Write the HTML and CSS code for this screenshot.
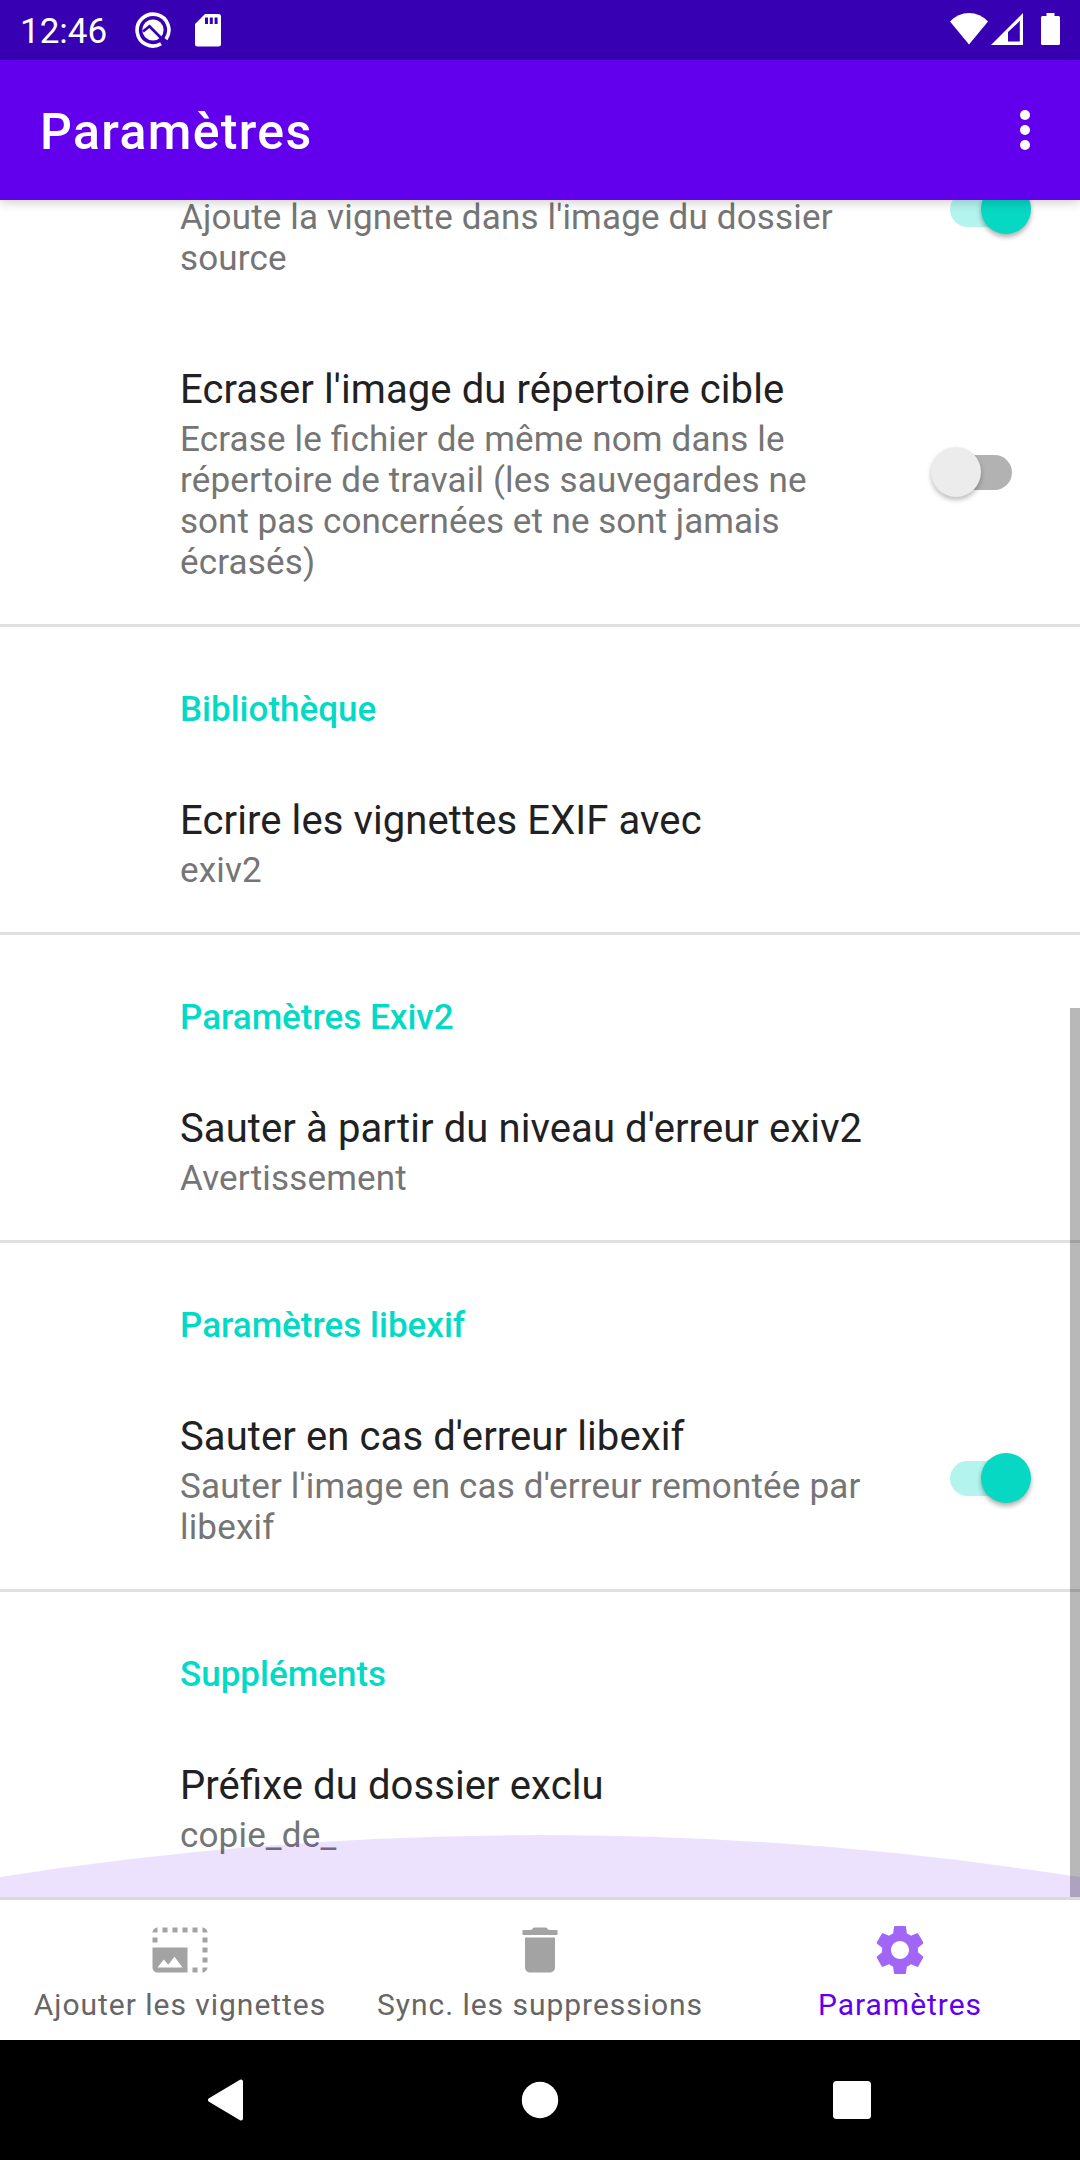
FILE: index.html
```html
<!DOCTYPE html>
<html lang="fr">
<head>
<meta charset="utf-8">
<title>Paramètres</title>
<link rel="stylesheet" href="styles.css">
</head>
<body>
<div class="screen">
  <header class="status-bar">
    <span class="clock">12:46</span>
    <svg class="status-q" width="36" height="36" viewBox="0 0 36 36">
      <path d="M26 31.800A15.900 15.900 0 1 1 31 27.200" fill="none" stroke="#fff" stroke-width="3.600"/>
      <circle cx="18" cy="18" r="10.600" fill="#fff"/>
      <path d="M8 19.500L14.500 14.200L29.500 29.500" fill="none" stroke="#3700b3" stroke-width="2.700"/>
    </svg>
    <svg class="status-sd" width="26" height="33" viewBox="0 0 26 33">
      <path fill="#fff" fill-rule="evenodd" d="M10 0H23.500Q26 0 26 2.500V30Q26 32.500 23.500 32.500H2.500Q0 32.500 0 30V10ZM10 3.500V10h3V3.500ZM14.800 3.500V10h3V3.500ZM19.600 3.500V10h3V3.500Z"/>
    </svg>
    <span class="spacer"></span>
    <div class="indicators">
      <svg width="38" height="32" viewBox="0 0 38 32"><path fill="#fff" d="M0 8.500Q8 0 19 0T38 8.500L19 31.500Z"/></svg>
      <svg class="status-cell" width="32" height="32" viewBox="0 0 32 32"><path fill="#fff" fill-rule="evenodd" d="M0 32L32 0V32ZM17 19V28.500H28.800V8Z"/></svg>
      <svg class="status-battery" width="19" height="32" viewBox="0 0 19 32"><path fill="#fff" d="M5.500 0h8v3H17.500Q19 3 19 4.500V30.500Q19 32 17.500 32H1.500Q0 32 0 30.500V4.500Q0 3 1.500 3h4Z"/></svg>
    </div>
  </header>

  <div class="app-bar">
    <h1 class="app-title">Paramètres</h1>
    <svg width="10" height="40" viewBox="0 0 10 40" fill="#fff"><circle cx="5" cy="5" r="5"/><circle cx="5" cy="20" r="5"/><circle cx="5" cy="35" r="5"/></svg>
  </div>

  <main class="content">
    <section class="group group-first">
      <div class="row row-cut">
        <div class="text"><p class="summary">Ajoute la vignette dans l'image du dossier<br>source</p></div>
        <div class="switch on"></div>
      </div>
      <div class="row row-overwrite">
        <div class="text">
          <p class="title">Ecraser l'image du répertoire cible</p>
          <p class="summary">Ecrase le fichier de même nom dans le<br>répertoire de travail (les sauvegardes ne<br><span class="tight">sont pas concernées et ne sont jamais</span><br>écrasés)</p>
        </div>
        <div class="switch off"></div>
      </div>
    </section>
    <section class="group">
      <h2 class="category">Bibliothèque</h2>
      <div class="row"><div class="text"><p class="title">Ecrire les vignettes EXIF avec</p><p class="summary">exiv2</p></div></div>
    </section>
    <section class="group">
      <h2 class="category">Paramètres Exiv2</h2>
      <div class="row"><div class="text"><p class="title">Sauter à partir du niveau d'erreur exiv2</p><p class="summary">Avertissement</p></div></div>
    </section>
    <section class="group">
      <h2 class="category">Paramètres libexif</h2>
      <div class="row">
        <div class="text"><p class="title">Sauter en cas d'erreur libexif</p><p class="summary">Sauter l'image en cas d'erreur remontée par<br>libexif</p></div>
        <div class="switch on"></div>
      </div>
    </section>
    <section class="group">
      <h2 class="category">Suppléments</h2>
      <div class="row"><div class="text"><p class="title">Préfixe du dossier exclu</p><p class="summary">copie_de_</p></div></div>
    </section>
    <div class="scrollbar"></div>
    <svg class="overscroll" width="1080" height="62" viewBox="0 0 1080 62"><path d="M0 42Q270 0 540 0T1080 42V62H0Z" fill="#6200ee" fill-opacity=".115"/></svg>
  </main>

  <nav class="tabs">
    <a class="tab">
      <svg class="tab-icon" width="60" height="60" viewBox="0 0 24 24" fill="#a3a3a3"><path d="M17 19h2v2h-2zM21 19h2c0 1-1 2-2 2zM21 15h2v2h-2zM21 11h2v2h-2zM21 7h2v2h-2zM17 3h2v2h-2zM13 3h2v2h-2zM9 3h2v2H9zM5 3h2v2H5zM1 7h2v2H1zM21 3c1 0 2 1 2 2h-2zM3 3v2H1c0-1 1-2 2-2zM1 11v8c0 1.100.9 2 2 2h12V11zm2 8l2.500-3.210 1.790 2.150 2.500-3.220L13 19z"/></svg>
      <span class="tab-label">Ajouter les vignettes</span>
    </a>
    <a class="tab">
      <svg class="tab-icon" width="60" height="60" viewBox="0 0 24 24" fill="#a3a3a3"><path d="M6 19c0 1.100.9 2 2 2h8c1.100 0 2-.9 2-2V7H6v12zM19 4h-3.500l-1-1h-5l-1 1H5v2h14V4z"/></svg>
      <span class="tab-label">Sync. les suppressions</span>
    </a>
    <a class="tab active">
      <svg class="tab-icon" width="60" height="60" viewBox="0 0 24 24" fill="#a166f5"><path d="M19.140 12.940c.04-.3.06-.61.06-.94 0-.32-.02-.64-.07-.94l2.030-1.580c.18-.14.23-.41.12-.61l-1.920-3.320c-.12-.22-.37-.29-.59-.22l-2.390.96c-.5-.38-1.030-.7-1.620-.94l-.36-2.540c-.04-.24-.24-.41-.48-.41h-3.840c-.24 0-.43.17-.47.41l-.36 2.540c-.59.24-1.130.57-1.620.94l-2.390-.96c-.22-.08-.47 0-.59.22L2.740 8.870c-.12.21-.08.47.12.61l2.030 1.580c-.05.3-.09.63-.09.94s.02.64.07.94l-2.030 1.580c-.18.14-.23.41-.12.61l1.920 3.320c.12.22.37.29.59.22l2.390-.96c.5.38 1.030.7 1.620.94l.36 2.540c.05.24.24.41.48.41h3.840c.24 0 .44-.17.47-.41l.36-2.540c.59-.24 1.130-.56 1.620-.94l2.390.96c.22.08.47 0 .59-.22l1.920-3.320c.12-.22.07-.47-.12-.61l-2.010-1.580zM12 15.600c-1.980 0-3.600-1.620-3.600-3.600s1.620-3.600 3.600-3.600 3.600 1.620 3.600 3.600-1.620 3.600-3.600 3.600z"/></svg>
      <span class="tab-label">Paramètres</span>
    </a>
  </nav>

  <footer class="system-nav">
    <svg width="36" height="42" viewBox="0 0 36 42"><path d="M3 21L34 2.500V39.500Z" fill="#fff" stroke="#fff" stroke-width="4" stroke-linejoin="round"/></svg>
    <svg class="home" width="38" height="38" viewBox="0 0 38 38"><circle cx="19" cy="19" r="18.200" fill="#fff"/></svg>
    <svg width="38" height="38" viewBox="0 0 38 38"><rect width="38" height="38" rx="3.500" fill="#fff"/></svg>
  </footer>
</div>
</body>
</html>
```
FILE: styles.css
```css
* { box-sizing: border-box; margin: 0; padding: 0; }
body { font-family: Roboto, sans-serif; background: #fff; }
svg { display: block; flex: none; }
.screen { width: 1080px; height: 2160px; display: flex; flex-direction: column; overflow: hidden; background: #fff; }

.status-bar { height: 60px; flex: none; background: #3700b3; display: flex; align-items: center; padding: 0 20px; color: #fff; }
.clock { font-size: 35px; line-height: 60px; padding-top: 3px; }
.status-q { margin-left: 28px; }
.status-sd { margin-left: 24px; }
.spacer { flex: 1; }
.indicators { display: flex; align-items: center; margin-bottom: 2px; }
.status-cell { margin-left: 3px; }
.status-battery { margin-left: 18px; }

.app-bar { height: 140px; flex: none; background: #6200ee; color: #fff; display: flex; align-items: center; justify-content: space-between; padding: 0 50px 0 40px; position: relative; z-index: 2; box-shadow: 0 3px 10px rgba(0, 0, 0, .18); }
.app-title { font-size: 50px; font-weight: 500; letter-spacing: 1.35px; line-height: 60px; padding-top: 4px; }

.content { flex: 1; min-height: 0; overflow: hidden; position: relative; }
.group { padding: 62px 0 41px; border-bottom: 3px solid #e0e0e0; }
.group-first { padding-top: 0; }
.group:nth-child(5) { border-bottom: 0; }
.category { padding-left: 180px; font-size: 35px; line-height: 41px; font-weight: 500; color: #03dac5; margin-bottom: 67px; }
.row { padding-left: 180px; padding-right: 49px; display: flex; align-items: center; justify-content: space-between; }
.row-cut { margin-bottom: 87px; align-items: flex-start; }
.row-cut .text { margin-top: -3px; }
.row-cut .switch { margin-top: -16px; }
.row-overwrite { padding-right: 68px; }
.title, .summary { white-space: nowrap; font-feature-settings: "liga" 1; }
.title { font-size: 40px; line-height: 47px; letter-spacing: .1px; color: #212121; margin-bottom: 6px; }
.summary { font-size: 35px; line-height: 41px; letter-spacing: .17px; color: #757575; }
.tight { letter-spacing: .02px; }

.switch { width: 81px; height: 50px; flex: none; display: flex; align-items: center; position: relative; margin-bottom: 5px; }
.switch::before { content: ""; width: 70px; height: 35px; border-radius: 18px; background: #b4f4ee; }
.switch::after { content: ""; position: absolute; top: 0; right: 0; width: 50px; height: 50px; border-radius: 50%; background: #06d8c4; box-shadow: 0 3px 5px rgba(0, 0, 0, .32); }
.switch.off { justify-content: flex-end; }
.switch.off::before { background: #b2b2b2; }
.switch.off::after { right: auto; left: 0; background: #ececec; box-shadow: 0 3px 5px rgba(0, 0, 0, .26); }

.scrollbar { position: absolute; right: 0; top: 808px; bottom: 0; width: 10px; background: rgba(0, 0, 0, .28); }
.overscroll { position: absolute; left: 0; bottom: 0; }

.tabs { height: 143px; flex: none; border-top: 3px solid #dad9dc; display: grid; grid-template-columns: repeat(3, 1fr); background: #fff; }
.tab { display: flex; flex-direction: column; align-items: center; padding-top: 20px; color: #666; }
.tab.active { color: #6200ee; }
.tab-label { font-size: 30px; line-height: 35px; letter-spacing: .97px; margin-top: 7px; white-space: nowrap; }

.system-nav { height: 120px; flex: none; background: #000; display: flex; align-items: center; justify-content: space-between; padding: 0 209px 0 207px; }
.home { margin-left: 4px; }
```
